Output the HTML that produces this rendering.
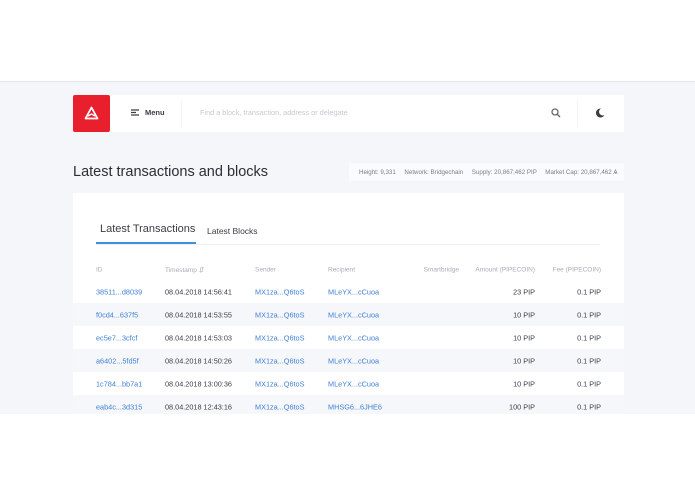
<!DOCTYPE html>
<html><head><style>
*{margin:0;padding:0;box-sizing:border-box}
body{width:695px;height:494px;background:#fff;font-family:"Liberation Sans",sans-serif;position:relative;overflow:hidden}
.bg{position:absolute;left:0;top:81px;width:695px;height:333px;background:#f5f6f9;border-top:1px solid #e2e4e8}
.abs{position:absolute}
.hdr{left:73px;top:95px;width:551px;height:37px;background:#fff}
.logo{left:73px;top:95px;width:37px;height:37px;background:#e8202e;border-radius:2px}
.t{position:absolute;white-space:nowrap}
.card{left:73px;top:193px;width:551px;height:221px;background:#fff}
.row{position:absolute;left:73px;width:551px;height:23px}
.g{background:#f6f7fa}
.c{position:absolute;font-size:7.3px;white-space:nowrap;transform:translateY(-50%)}
.b{color:#3f7fd6}.k{color:#3a3d45}
.h{color:#a9adb7;font-size:6.5px}
.r{text-align:right}
</style></head><body>
<div class="bg"></div>
<div class="abs hdr"></div>
<div class="abs logo"><svg width="37" height="37"><path d="M18.5 12.5 L24.5 23.5 L12.5 23.5 Z" fill="none" stroke="#fff" stroke-width="1.8" stroke-linejoin="round"/><path d="M15 21 L18.5 19 L22 21" fill="none" stroke="#fff" stroke-width="1.3"/></svg></div>
<svg class="abs" style="left:131px;top:109px" width="9" height="8"><path d="M0 1h8M0 3.5h5M0 6h8" stroke="#3a3d45" stroke-width="1.2"/></svg>
<div class="t" style="left:145px;top:108px;font-size:7.5px;font-weight:bold;color:#3a3d45">Menu</div>
<div class="abs" style="left:181px;top:100px;width:1px;height:27px;background:#f3f4f6"></div>
<div class="t" style="left:200px;top:108px;font-size:7.3px;color:#c6c9d2">Find a block, transaction, address or delegate</div>
<svg class="abs" style="left:551px;top:108px" width="10" height="10"><circle cx="4" cy="4" r="3" fill="none" stroke="#666a73" stroke-width="1.3"/><path d="M6.2 6.2L9 9" stroke="#666a73" stroke-width="1.4"/></svg>
<div class="abs" style="left:577px;top:100px;width:1px;height:27px;background:#f3f4f6"></div>
<svg class="abs" style="left:595px;top:108px" width="10" height="10"><path d="M6 0.5A4.5 4.5 0 1 0 9.5 7 A3.6 3.6 0 0 1 6 0.5Z" fill="#3a3d45"/></svg>
<div class="t" style="left:73px;top:164px;font-size:14.5px;color:#2b2e36">Latest transactions and blocks</div>
<div class="abs" style="left:349px;top:163px;width:275px;height:18px;background:#fafbfc"></div>
<div class="t" style="left:359px;top:169px;font-size:6.2px;color:#7a7e88">Height: 9,331 &nbsp;&nbsp;&nbsp; Network: Bridgechain &nbsp;&nbsp;&nbsp; Supply: 20,867,462 PIP &nbsp;&nbsp;&nbsp; Market Cap: 20,867,462 Ѧ</div>
<div class="abs card"></div>
<div class="t" style="left:100px;top:223px;font-size:11px;color:#3a3d45">Latest Transactions</div>
<div class="t" style="left:207px;top:226px;font-size:8.5px;color:#3a3d45">Latest Blocks</div>
<div class="abs" style="left:96px;top:244px;width:504px;height:1px;background:#eef0f3"></div>
<div class="abs" style="left:96px;top:242px;width:100px;height:2px;background:#3f8fd9"></div>

<div class="c h" style="left:96px;top:270px">ID</div>
<div class="c h" style="left:165px;top:270px">Timestamp ⇵</div>
<div class="c h" style="left:255px;top:270px">Sender</div>
<div class="c h" style="left:328px;top:270px">Recipient</div>
<div class="c h r" style="right:236px;top:270px">Smartbridge</div>
<div class="c h r" style="right:160px;top:270px">Amount (PIPECOIN)</div>
<div class="c h r" style="right:94px;top:270px">Fee (PIPECOIN)</div>

<div class="row g" style="top:303px"></div>
<div class="row g" style="top:349px"></div>
<div class="row g" style="top:395px;height:19px"></div>

<div class="c b" style="left:96px;top:292px">38511...d8039</div><div class="c k" style="left:165px;top:292px">08.04.2018 14:56:41</div><div class="c b" style="left:255px;top:292px">MX1za...Q6toS</div><div class="c b" style="left:328px;top:292px">MLeYX...cCuoa</div><div class="c k r" style="right:160px;top:292px">23 PIP</div><div class="c k r" style="right:94px;top:292px">0.1 PIP</div>
<div class="c b" style="left:96px;top:315px">f0cd4...637f5</div><div class="c k" style="left:165px;top:315px">08.04.2018 14:53:55</div><div class="c b" style="left:255px;top:315px">MX1za...Q6toS</div><div class="c b" style="left:328px;top:315px">MLeYX...cCuoa</div><div class="c k r" style="right:160px;top:315px">10 PIP</div><div class="c k r" style="right:94px;top:315px">0.1 PIP</div>
<div class="c b" style="left:96px;top:338px">ec5e7...3cfcf</div><div class="c k" style="left:165px;top:338px">08.04.2018 14:53:03</div><div class="c b" style="left:255px;top:338px">MX1za...Q6toS</div><div class="c b" style="left:328px;top:338px">MLeYX...cCuoa</div><div class="c k r" style="right:160px;top:338px">10 PIP</div><div class="c k r" style="right:94px;top:338px">0.1 PIP</div>
<div class="c b" style="left:96px;top:361px">a6402...5fd5f</div><div class="c k" style="left:165px;top:361px">08.04.2018 14:50:26</div><div class="c b" style="left:255px;top:361px">MX1za...Q6toS</div><div class="c b" style="left:328px;top:361px">MLeYX...cCuoa</div><div class="c k r" style="right:160px;top:361px">10 PIP</div><div class="c k r" style="right:94px;top:361px">0.1 PIP</div>
<div class="c b" style="left:96px;top:384px">1c784...bb7a1</div><div class="c k" style="left:165px;top:384px">08.04.2018 13:00:36</div><div class="c b" style="left:255px;top:384px">MX1za...Q6toS</div><div class="c b" style="left:328px;top:384px">MLeYX...cCuoa</div><div class="c k r" style="right:160px;top:384px">10 PIP</div><div class="c k r" style="right:94px;top:384px">0.1 PIP</div>
<div class="c b" style="left:96px;top:407px">eab4c...3d315</div><div class="c k" style="left:165px;top:407px">08.04.2018 12:43:16</div><div class="c b" style="left:255px;top:407px">MX1za...Q6toS</div><div class="c b" style="left:328px;top:407px">MHSG6...6JHE6</div><div class="c k r" style="right:160px;top:407px">100 PIP</div><div class="c k r" style="right:94px;top:407px">0.1 PIP</div>
<div class="abs" style="left:0;top:414px;width:695px;height:80px;background:#fff"></div>
</body></html>
